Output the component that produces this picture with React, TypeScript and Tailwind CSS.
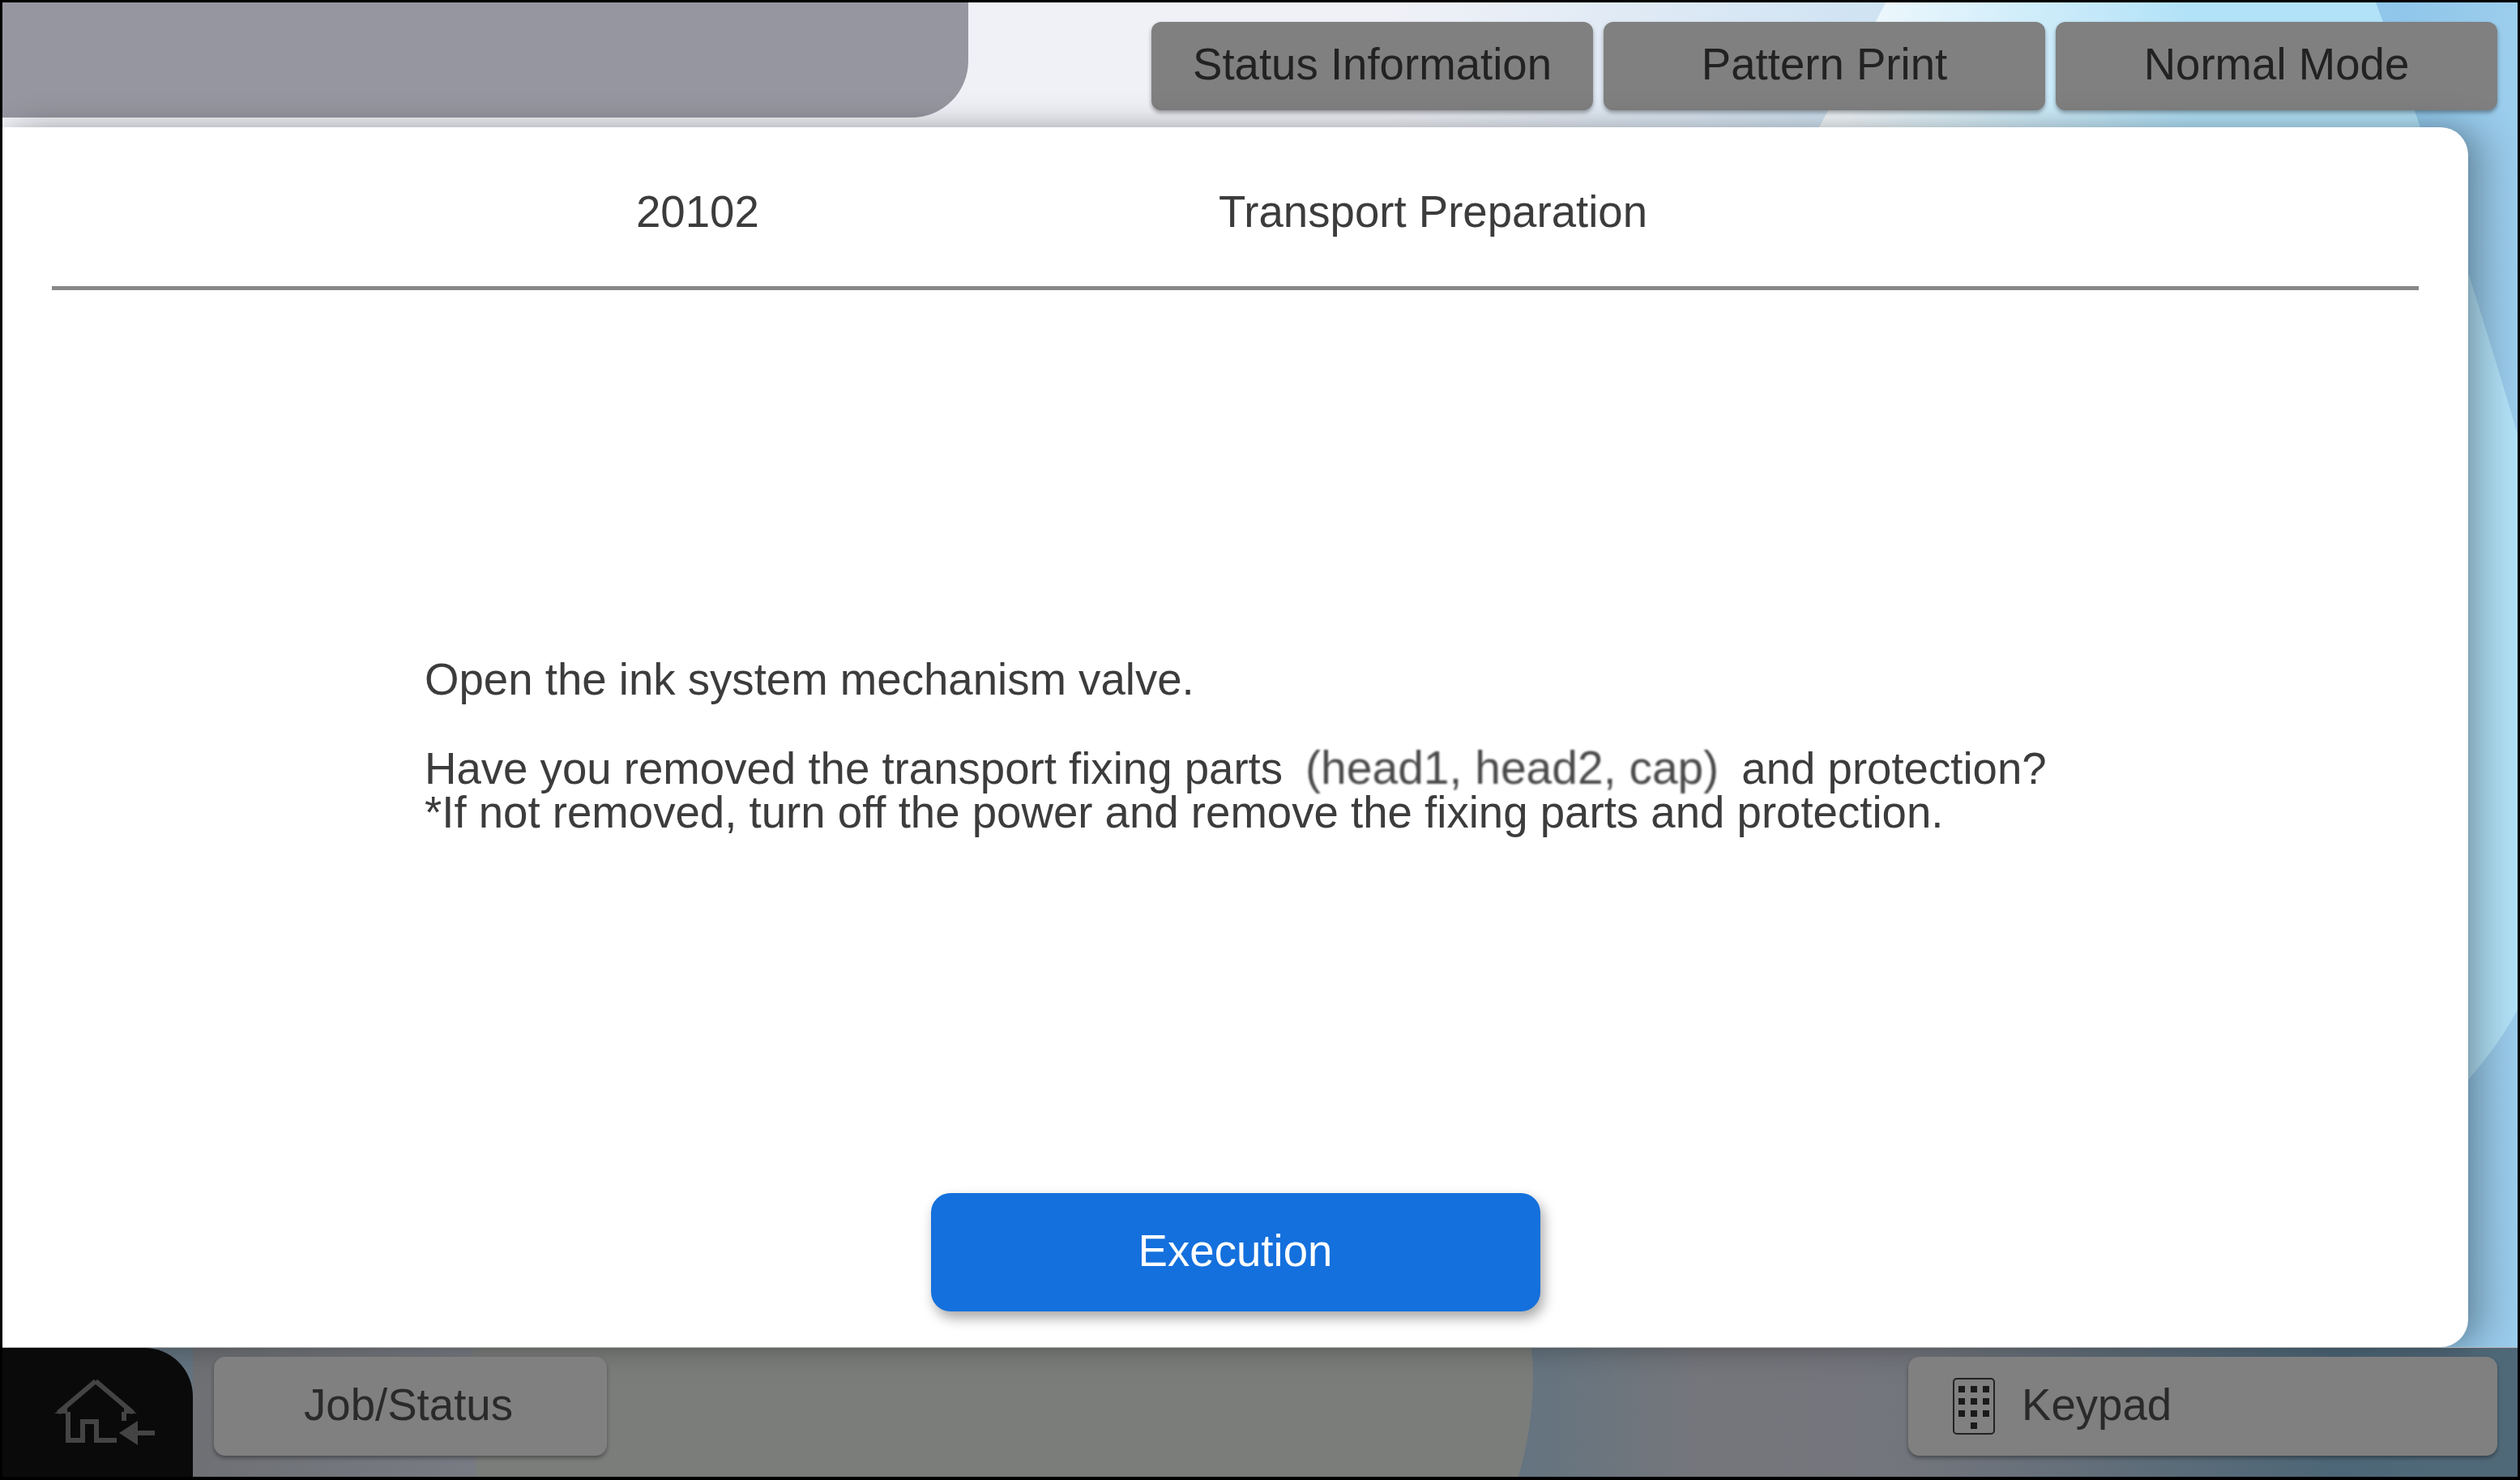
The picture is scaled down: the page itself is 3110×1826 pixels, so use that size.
const FONT = "font-['Liberation_Sans',Arial,sans-serif]";

// wallpaper behind the header, the right edge and the dimmed footer
function Backdrop() {
  return (
    <svg className="absolute inset-0 h-full w-full" viewBox="3 3 3104 1819" preserveAspectRatio="none">
      <defs>
        <linearGradient id="base" gradientUnits="userSpaceOnUse" x1="0" y1="0" x2="3110" y2="0">
          <stop offset="0.55" stopColor="#f0f1f7" />
          <stop offset="0.745" stopColor="#cfe3f3" />
          <stop offset="0.95" stopColor="#8fc6ea" />
          <stop offset="1" stopColor="#9ccdec" />
        </linearGradient>
        <linearGradient id="lens" gradientUnits="userSpaceOnUse" x1="2245" y1="0" x2="2700" y2="0">
          <stop offset="0" stopColor="#f7fbfd" />
          <stop offset="1" stopColor="#b2e2f8" />
        </linearGradient>
        <linearGradient id="footL" gradientUnits="userSpaceOnUse" x1="238" y1="0" x2="590" y2="0">
          <stop offset="0" stopColor="#6e7074" />
          <stop offset="1" stopColor="#787b83" />
        </linearGradient>
        <linearGradient id="footR" gradientUnits="userSpaceOnUse" x1="1880" y1="0" x2="3000" y2="0">
          <stop offset="0" stopColor="#647480" />
          <stop offset="0.2" stopColor="#75767b" />
          <stop offset="0.42" stopColor="#73757c" />
          <stop offset="0.9" stopColor="#4c6677" />
          <stop offset="1" stopColor="#506979" />
        </linearGradient>
      </defs>
      <rect x="0" y="0" width="3110" height="1662" fill="url(#base)" />
      <path d="M2329 0 L2931 0 Q3020 240 3110 546 L3110 1240 Q3060 1340 2900 1470 L2200 1662 L2200 157 L2245 157 Z" fill="url(#lens)" />
      <rect x="0" y="1662" width="3110" height="164" fill="url(#footR)" />
      <path d="M238 1662 L1890 1662 Q1898 1740 1873 1826 L238 1826 Z" fill="#7b7d7b" />
      <path d="M238 1662 L583 1662 Q590 1740 586 1826 L238 1826 Z" fill="url(#footL)" />
    </svg>
  );
}

function HomeIcon() {
  return (
    <svg width="135" height="90" viewBox="60 48 135 90" fill="none">
      <path d="M118 54 L72 93 M118 54 L164 93" stroke="#444" strokeWidth="6" />
      <path d="M67 94 L83 84 L83 94 Z M169 94 L153 84 L153 94 Z" fill="#444" />
      <path d="M84 92 L84 127 L102 127 L102 104 L119 104 L119 127 L144 127 M153 92 L153 103" stroke="#444" strokeWidth="6" />
      <path d="M147 118 L170 103 L170 133 Z" fill="#444" />
      <path d="M168 118 L191 118" stroke="#444" strokeWidth="6" />
    </svg>
  );
}

function KeypadIcon() {
  const keys = [
    [7, 10], [22, 10], [37, 10],
    [7, 25], [22, 25], [37, 25],
    [7, 40], [22, 40], [37, 40],
    [22, 55],
  ];
  return (
    <svg width="52" height="70" viewBox="0 0 52 70" fill="none">
      <rect x="1" y="1" width="50" height="68" rx="4" stroke="#222" strokeWidth="2" />
      {keys.map(([x, y]) => (
        <rect key={`${x}-${y}`} x={x} y={y} width="8" height="8" fill="#1a1a1a" />
      ))}
    </svg>
  );
}

function TopButton({ label }: { label: string }) {
  return (
    <div className="flex h-[109px] w-[545px] items-center justify-center rounded-[12px] bg-[#808080] pb-1 text-[54.6px] text-[#222] shadow-[0_3px_5px_rgba(0,0,0,0.35)]">
      {label}
    </div>
  );
}

export default function App() {
  return (
    <div className={`${FONT} box-border h-[1826px] w-[3110px] overflow-hidden border-x-[3px] border-t-[3px] border-b-[4px] border-black`}>
      <div className="relative flex h-full w-full flex-col">
        <Backdrop />

        {/* Header */}
        <div className="relative flex h-[154px] shrink-0 items-start justify-between pr-[25px]">
          <div className="h-[142px] w-[1192px] rounded-br-[70px] bg-[#9696a0]" />
          <div className="flex gap-[13px] pt-[24px]">
            <TopButton label="Status Information" />
            <TopButton label="Pattern Print" />
            <TopButton label="Normal Mode" />
          </div>
        </div>

        {/* Dialog panel */}
        <div className="relative flex w-[3043px] flex-1 flex-col rounded-r-[34px] bg-white text-[54.6px] leading-[54px] text-[#3c3c3c] shadow-[0_0_24px_rgba(0,0,0,0.15),26px_0_44px_rgba(0,0,0,0.22)]">
          <div className="flex h-[196px] items-center pl-[782px] pt-[14px]">
            <span className="w-[719px]">20102</span>
            <span>Transport Preparation</span>
          </div>
          <div className="mx-[61px] h-[5px] bg-[#888]" />

          <div className="flex-1 pl-[521px] pt-[454px]">
            <p>Open the ink system mechanism valve.</p>
            <p className="mt-[54px]">
              Have you removed the transport fixing parts
              <span className="ml-[28px] mr-[28px] text-[57px] text-[#4a4a4a] blur-[0.8px]">(head1, head2, cap)</span>
              and protection?
            </p>
            <p>*If not removed, turn off the power and remove the fixing parts and protection.</p>
          </div>

          <div className="mb-[44px] flex justify-center">
            <div className="flex h-[146px] w-[752px] items-center justify-center rounded-[24px] bg-[#1470dd] pb-[3px] text-white shadow-[4px_8px_16px_rgba(0,0,0,0.35)]">
              Execution
            </div>
          </div>
        </div>

        {/* Footer */}
        <div className="relative flex h-[160px] shrink-0 items-start border-t border-[#b5b5b5] text-[54.6px] text-[#2a2a2a]">
          <div className="flex h-full w-[235px] items-start rounded-tr-[60px] bg-[#0a0a0a] pl-[57px] pt-[35px]">
            <HomeIcon />
          </div>
          <div className="ml-[26px] mt-[11px] flex h-[122px] w-[485px] items-center justify-center rounded-[14px] bg-[#808080] pb-[3px] pr-[5px] shadow-[0_3px_5px_rgba(0,0,0,0.35)]">
            Job/Status
          </div>
          <div className="ml-auto mr-[25px] mt-[11px] flex h-[122px] w-[727px] items-center gap-[33px] rounded-[14px] bg-[#808080] pl-[55px] shadow-[0_3px_5px_rgba(0,0,0,0.35)]">
            <KeypadIcon />
            <span className="pb-[3px]">Keypad</span>
          </div>
        </div>
      </div>
    </div>
  );
}
